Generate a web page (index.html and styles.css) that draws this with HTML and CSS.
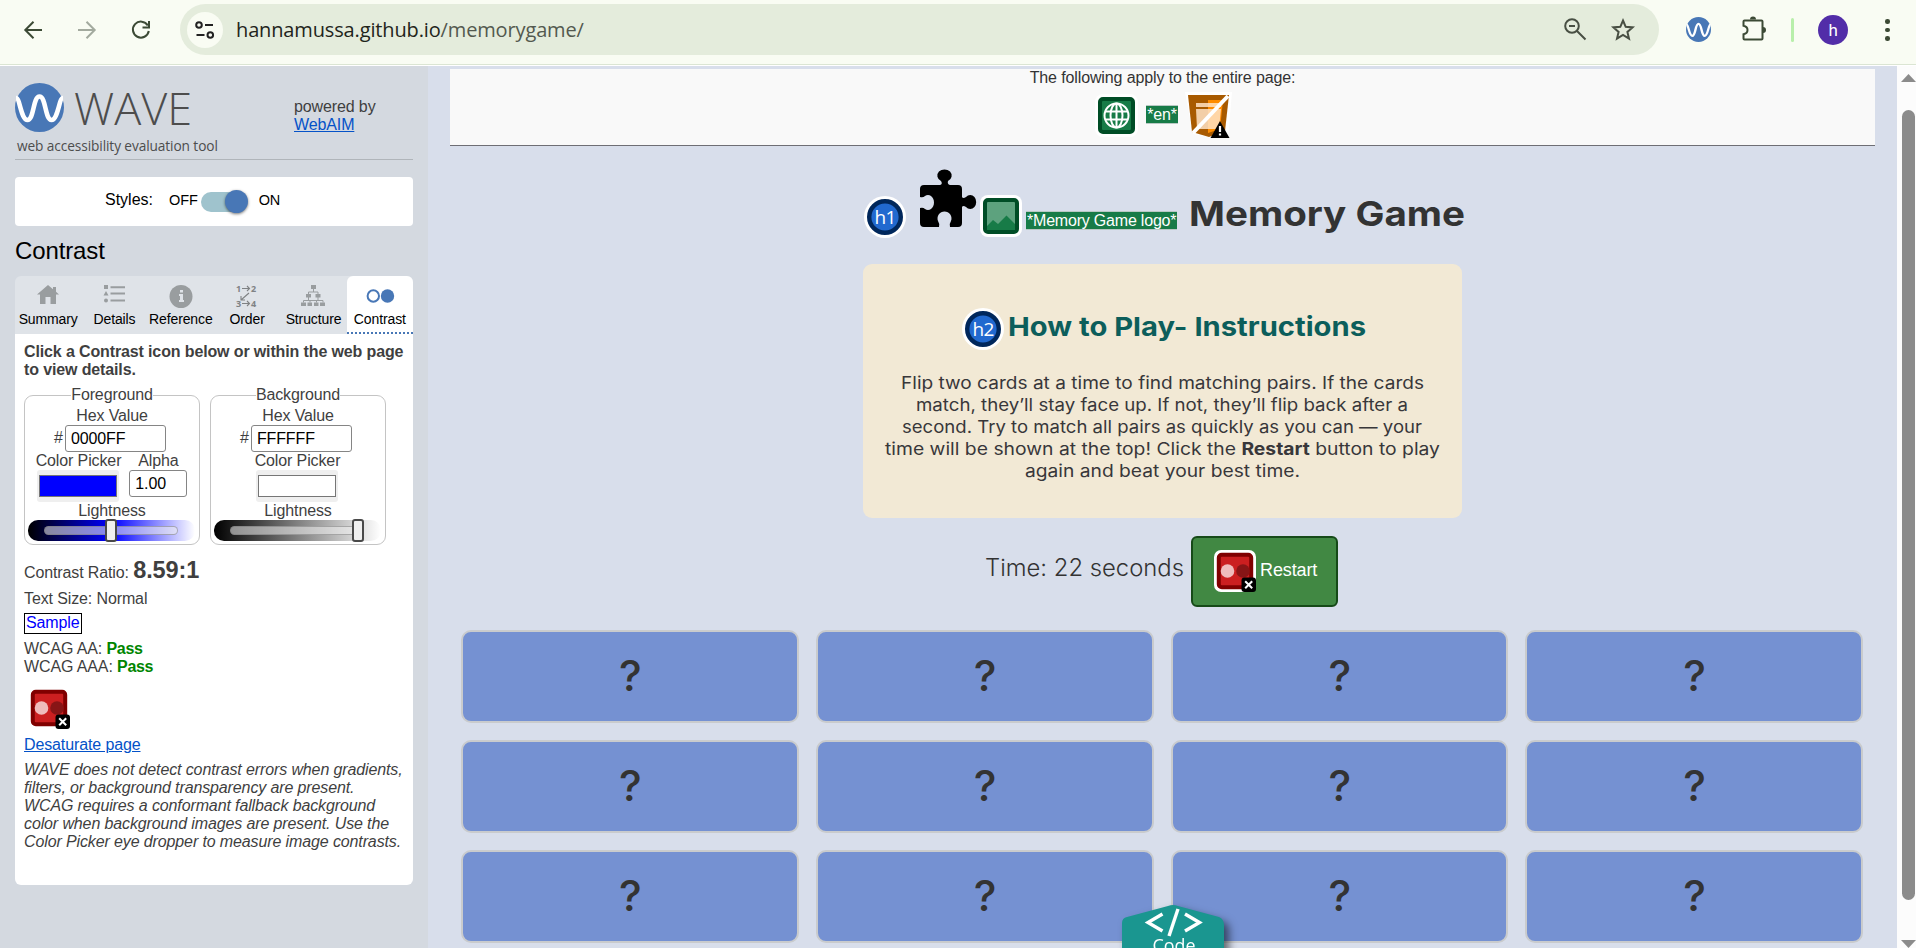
FILE: index.html
```html
<!DOCTYPE html>
<html lang="en">
<head>
<meta charset="utf-8">
<title>Memory Game</title>
<link rel="stylesheet" href="styles.css">
</head>
<body>
<svg width="0" height="0" class="defs">
  <defs>
    <symbol id="wave" viewBox="0 0 49 49">
      <circle cx="24.500" cy="24.500" r="24.500" fill="#4877b6"/>
      <path d="M1 15C5 15 6 37 12.500 37C19 37 18 13.500 24.500 13.500C31 13.500 30 37 36.500 37C43 37 44 15 48 15" fill="none" stroke="#fff" stroke-width="4.600"/>
    </symbol>
    <symbol id="contrast" viewBox="0 0 42 42">
      <rect x="4.800" y="4.800" width="32.400" height="32.400" rx="3" fill="#cb1f20" stroke="#800000" stroke-width="4"/>
      <circle cx="13.500" cy="21" r="6.800" fill="#efbcbc"/><circle cx="29" cy="21" r="6.800" fill="#871516"/>
      <rect x="27.500" y="27.500" width="14.500" height="14.500" rx="3" fill="#000"/>
      <path d="M31.200 31.200l7 7m0-7l-7 7" stroke="#fff" stroke-width="2"/>
    </symbol>
  </defs>
</svg>
<header class="toolbar">
  <svg class="nav" width="164" height="60" viewBox="0 0 164 60" fill="none" stroke="#3c4a35" stroke-width="2">
    <path d="M42 30H25.500M33.500 21.800L25.300 30l8.200 8.200"/>
    <path d="M78 30h16.500M86.500 21.800l8.200 8.200-8.200 8.200" stroke="#a3aa9e"/>
    <path d="M147.800 25.500A8 8 0 1 0 148.800 31M149 21v6.500h-6.500" />
  </svg>
  <div class="omnibox">
    <span class="site"><svg width="36" height="36" viewBox="0 0 36 36" fill="none" stroke="#222" stroke-width="2"><circle cx="12" cy="13" r="2.800"/><path d="M18 13h8M9.500 23h8"/><circle cx="23.300" cy="23" r="2.800"/></svg></span>
    <span class="url">hannamussa.github.io<i>/memorygame/</i></span>
    <svg class="bar-icons" width="80" height="40" viewBox="0 0 80 40" fill="none" stroke="#484f43" stroke-width="2"><circle cx="11" cy="16" r="6.800"/><path d="M16 21l8.500 8.500M8 16h6"/><path d="M62 10.500l2.700 6.300 6.900.6-5.200 4.500 1.600 6.700-6-3.600-6 3.600 1.600-6.700-5.200-4.500 6.900-.6z"/></svg>
  </div>
  <svg class="ext" width="25" height="25"><use href="#wave"/></svg>
  <svg class="puzzle-outline" width="26" height="26" viewBox="0 0 26 26" fill="none" stroke="#3c4a35" stroke-width="2"><path d="M3.500 4.500h17q1 0 1 1v17q0 1-1 1h-17q-1 0-1-1v-4.200q4-.8 4-4.300t-4-4.300V5.500q0-1 1-1z"/><path d="M9 3.600a3 3 0 0 1 6 0zM22 11a3 3 0 0 1 0 6z" fill="#3c4a35" stroke="none"/></svg>
  <span class="divider"></span>
  <span class="avatar">h</span>
  <span class="dots"><b></b><b></b><b></b></span>
</header>
<div class="window">
<aside class="sidebar">
  <div class="brand">
    <svg class="logo" width="49" height="49"><use href="#wave"/></svg>
    <svg class="wordmark" width="120" height="44"><text x="-2" y="37" textLength="118" lengthAdjust="spacingAndGlyphs">WAVE</text></svg>
    <p class="powered">powered by<br><a>WebAIM</a></p>
  </div>
  <p class="tagline">web accessibility evaluation tool</p>
  <div class="styles-box"><span class="lbl">Styles:</span><span>OFF</span><span class="switch"></span><span>ON</span></div>
  <h2>Contrast</h2>
  <nav class="tabs">
    <span><svg width="28" height="26" viewBox="0 0 28 26" fill="#999d9f"><path d="M14 3L3 12.500h3V22h5.500v-7h5v7H22v-9.500h3l-3-2.700V5h-3v2.300z"/></svg>Summary</span>
    <span><svg width="28" height="26" viewBox="0 0 28 26" fill="#999d9f"><path d="M4 3h4v4H4zM6 9l2.500 4.500h-5zM10.500 4.300H25v2H10.500zM10.500 10.500H25v2H10.500zM10.500 17.500H25v2H10.500z"/><circle cx="6" cy="18.500" r="2"/></svg>Details</span>
    <span><svg width="28" height="26" viewBox="0 0 28 26"><circle cx="14" cy="14.500" r="11.500" fill="#999d9f"/><path d="M13 8h3v2.500h-3zM12 12h4v6h1v2h-5v-2h1v-4h-1z" fill="#dfe3e8"/></svg>Reference</span>
    <span><svg class="order" width="28" height="26" viewBox="0 0 28 26"><text x="3" y="10">1</text><text x="18" y="10">2</text><text x="3" y="25">3</text><text x="18" y="25">4</text><path d="M9 6.500h7.500M14 4l2.500 2.500L14 9M9 21.500h7.500M14 19l2.500 2.500L14 24M16 11l-8 7M8 14v4h4" fill="none" stroke="#7f8284" stroke-width="1.100"/></svg>Order</span>
    <span><svg width="28" height="26" viewBox="0 0 28 26" fill="#999d9f"><path d="M12 3h5v4h-5zM7 12h5v3.500H7zM16.500 12h5v3.500h-5zM2 20.500h5V24H2zM8.500 20.500h4.500V24H8.500zM15 20.500h4.500V24H15zM21 20.500h5V24h-5z"/><path d="M14.500 7v3M9.500 12v-2h9.500v2M9.500 15v3M4.500 20.500v-2H24v2M11 18.500v2M17.500 18.500v2M19 15v3" fill="none" stroke="#999d9f"/></svg>Structure</span>
    <span class="active"><svg width="30" height="26" viewBox="0 0 30 26"><circle cx="8.300" cy="14" r="5.700" fill="#fff" stroke="#4877b6" stroke-width="2"/><circle cx="22.500" cy="14" r="6.700" fill="#4877b6"/></svg>Contrast</span>
  </nav>
  <section class="panel">
    <p class="intro">Click a Contrast icon below or within the web page<br>to view details.</p>
    <div class="pickers">
      <div class="picker">
        <span class="legend">Foreground</span>
        <span class="label">Hex Value</span>
        <div class="hex">#<span class="input">0000FF</span></div>
        <div class="pair"><div class="col"><span>Color Picker</span><span class="swatch"><i class="blue"></i></span></div><div class="col"><span>Alpha</span><span class="input alpha">1.00</span></div></div>
        <span class="label light">Lightness</span>
        <div class="slider fg"><span class="track"></span><span class="thumb"></span></div>
      </div>
      <div class="picker">
        <span class="legend">Background</span>
        <span class="label">Hex Value</span>
        <div class="hex">#<span class="input">FFFFFF</span></div>
        <div class="pair"><div class="col"><span>Color Picker</span><span class="swatch"><i class="white"></i></span></div></div>
        <span class="label light">Lightness</span>
        <div class="slider bg"><span class="track"></span><span class="thumb"></span></div>
      </div>
    </div>
    <p class="ratio">Contrast Ratio: <b>8.59:1</b></p>
    <p class="size">Text Size: Normal</p>
    <p class="sample"><span>Sample</span></p>
    <p class="wcag">WCAG AA: <b>Pass</b><br>WCAG AAA: <b>Pass</b></p>
    <svg class="cicon" width="42" height="42"><use href="#contrast"/></svg>
    <p class="desat"><a>Desaturate page</a></p>
    <p class="note">WAVE does not detect contrast errors when gradients,<br>filters, or background transparency are present.<br>WCAG requires a conformant fallback background<br>color when background images are present. Use the<br>Color Picker eye dropper to measure image contrasts.</p>
  </section>
</aside>
<main class="page">
  <div class="strip">
    <p>The following apply to the entire page:</p>
    <div class="strip-icons">
      <svg width="43" height="43" viewBox="0 0 43 43"><rect width="43" height="43" rx="8" fill="#fff"/><rect x="5" y="5" width="33" height="33" rx="3" fill="#177b47" stroke="#004d26" stroke-width="4"/><g fill="none" stroke="#fff" stroke-width="2"><circle cx="21.500" cy="21.500" r="12"/><ellipse cx="21.500" cy="21.500" rx="6" ry="12"/><path d="M21.500 9.500v24M10 17.500h23M10 25.500h23"/></g></svg>
      <span class="tag">*en*</span>
      <svg width="48" height="47" viewBox="0 0 48 47"><path d="M0 0h47l-4 46H30L8 42z" fill="#fff"/><path d="M3 3h41l-4 36-16 6L7 40z" fill="#a85a00"/><path d="M23 8h15l-3 29-12 4z" fill="#ff8c00"/><path d="M11 11h25v4H11zM11 17h25l-2 20H12z" fill="#ffe3c4" opacity=".85"/><path d="M43 4L8 41" stroke="#fff" stroke-width="4"/><path d="M35 29l9.500 17h-19z" fill="#000"/><path d="M35 34v6M35 41.500v2" stroke="#fff" stroke-width="2.200"/></svg>
    </div>
  </div>
  <h1 class="title">
    <svg class="hicon h1i" width="42" height="42" viewBox="0 0 42 42"><circle cx="21" cy="21" r="21" fill="#fff"/><circle cx="21" cy="21" r="15.800" fill="#2169cf" stroke="#00275b" stroke-width="4.400"/><text x="21" y="28" text-anchor="middle">h1</text></svg>
    <svg class="puzzle" width="56" height="56" viewBox="0 0 56 56"><path d="M4 14H20Q23 13 21 10A7.200 6.200 0 1 1 28 10Q27 13 30 14H38Q42 14 42 18V26Q43 28 46 26A6 7 0 1 1 46 36Q43 34 42 36V52Q42 56 38 56H30Q29 53 31 50A7 7 0 1 0 18 50Q20 53 19 56H4Q0 56 0 52V37Q3 36 5 38A6 7.500 0 1 0 5 25Q3 27 0 26V18Q0 14 4 14Z"/></svg>
    <svg class="imgicon" width="42" height="42" viewBox="0 0 42 42"><rect width="42" height="42" rx="8" fill="#fff"/><rect x="5" y="5" width="32" height="32" rx="3" fill="#5da27e" stroke="#004d26" stroke-width="4"/><path d="M7 31l6-6 5 4 8.500-8.500L35 29v6H7z" fill="#177b47"/></svg>
    <span class="tag">*Memory Game logo*</span>
    <svg class="name" width="276" height="44"><text x="0" y="33" textLength="276" lengthAdjust="spacingAndGlyphs">Memory Game</text></svg>
  </h1>
  <section class="howto">
    <h2><svg class="hicon" width="42" height="42" viewBox="0 0 42 42"><circle cx="21" cy="21" r="21" fill="#fff"/><circle cx="21" cy="21" r="15.800" fill="#2169cf" stroke="#00275b" stroke-width="4.400"/><text x="21" y="28" text-anchor="middle">h2</text></svg><svg class="howto-title" width="358" height="40"><text x="0" y="30" textLength="358" lengthAdjust="spacingAndGlyphs">How to Play- Instructions</text></svg></h2>
    <svg class="copy" width="599" height="120">
      <text x="38" y="16" textLength="523" lengthAdjust="spacingAndGlyphs">Flip two cards at a time to find matching pairs. If the cards</text>
      <text x="53" y="38" textLength="492" lengthAdjust="spacingAndGlyphs">match, they’ll stay face up. If not, they’ll flip back after a</text>
      <text x="39" y="60" textLength="520" lengthAdjust="spacingAndGlyphs">second. Try to match all pairs as quickly as you can — your</text>
      <text x="22" y="82" textLength="555" lengthAdjust="spacingAndGlyphs">time will be shown at the top! Click the <tspan class="strong">Restart</tspan> button to play</text>
      <text x="162" y="104" textLength="275" lengthAdjust="spacingAndGlyphs">again and beat your best time.</text>
    </svg>
  </section>
  <div class="status"><svg class="time" width="199" height="62"><text x="0" y="40" textLength="199" lengthAdjust="spacingAndGlyphs">Time: 22 seconds</text></svg><span class="restart"><span class="rwrap"><svg width="42" height="42"><use href="#contrast"/></svg></span>Restart</span></div>
  <div class="board"><span>?</span><span>?</span><span>?</span><span>?</span><span>?</span><span>?</span><span>?</span><span>?</span><span>?</span><span>?</span><span>?</span><span>?</span></div>
  <div class="code"><svg width="130" height="43" viewBox="0 0 130 43"><path d="M0 18Q0 13 5 12L46 1Q51-1 56 1L97 12Q102 14 102 20V60H0z" fill="#1a9690"/><path d="M40.500 9L26 17.500 40.500 26M63 9L77.500 17.500 63 26" fill="none" stroke="#fff" stroke-width="3.400"/><path d="M56 4L47 31" stroke="#fff" stroke-width="3.400"/><text x="52" y="46.500" text-anchor="middle" textLength="43" lengthAdjust="spacingAndGlyphs">Code</text></svg></div>
</main>
<div class="scrollbar"><svg width="15" height="8"><path d="M0 8L7.500 0 15 8z" fill="#8b8b8b"/></svg><span class="grip"></span><svg width="15" height="8"><path d="M0 0h15L7.500 8z" fill="#8b8b8b"/></svg></div>
</div>
</body>
</html>
```
FILE: styles.css
```css
* { box-sizing: border-box; }
body { margin: 0; width: 1916px; height: 948px; overflow: hidden; font: 16px/18px "Liberation Sans", Arial, sans-serif; letter-spacing: -.12px; color: #3f3f3f; background: #fff; display: flex; flex-direction: column; }
p, h1, h2 { margin: 0; font-weight: inherit; }
svg { display: block; flex: none; overflow: visible; }
svg text { letter-spacing: 0; }
.defs { position: absolute; }
a { color: #0452c8; text-decoration: underline; }

.toolbar { height: 65px; flex: none; background: #f9fcf3; border-bottom: 1px solid #dbe5d3; display: flex; align-items: flex-start; margin-bottom: 1px; }
.nav { margin-right: 16px; }
.omnibox { width: 1479px; height: 51px; margin-top: 4px; border-radius: 26px; background: #e4ecdc; display: flex; align-items: center; padding: 0 18px 0 7px; }
.site { width: 36px; height: 36px; border-radius: 50%; background: #f9fcf3; }
.url { margin-left: 13px; font: 20px/40px "Open Sans", "Noto Sans", sans-serif; color: #1f251b; letter-spacing: -.14px; white-space: nowrap; }
.url i { font-style: normal; color: #53594f; }
.bar-icons { margin-left: auto; }
.ext { margin: 17px 0 0 27px; }
.puzzle-outline { margin: 16px 0 0 30px; }
.divider { width: 3px; height: 24px; margin: 18px 0 0 24px; border-radius: 2px; background: #b8efaa; }
.avatar { width: 30px; height: 30px; margin: 15px 0 0 24px; border-radius: 50%; background: #522da8; color: #fff; font: 17px/30px Roboto, sans-serif; text-align: center; }
.dots { display: grid; gap: 4px; margin: 19px 0 0 37px; }
.dots b { width: 4.500px; height: 4.500px; border-radius: 50%; background: #3c4a35; }

.window { flex: 1; min-height: 0; display: flex; }
.sidebar { width: 428px; flex: none; background: #d4d9e0; padding: 17px 15px 0; }
.brand { display: flex; height: 56px; }
.wordmark { margin: 5px 0 0 12px; }
.wordmark text { font: 300 45px "Open Sans", sans-serif; fill: #4d4d4d; }
.powered { margin: 15px 0 0 98px; white-space: nowrap; }
.tagline { height: 21px; border-bottom: 1px solid #b0b5ba; padding-left: 2px; font: 13.700px/14px "Open Sans", sans-serif; letter-spacing: -.1px; color: #4d4d4d; white-space: nowrap; }
.styles-box { height: 49px; margin-top: 17px; border-radius: 4px; background: #fff; display: flex; align-items: center; padding: 0 0 3px 90px; color: #000; font-size: 14.500px; }
.styles-box .lbl { font-size: 16px; margin-right: 16px; letter-spacing: 0; }
.switch { width: 44px; height: 20px; margin: 3px 14px 0 3px; border-radius: 10px; background: #9fc3cd; display: flex; justify-content: flex-end; align-items: center; }
.switch::after { content: ""; width: 23px; height: 23px; margin-right: -3px; border-radius: 50%; background: #4877b6; box-shadow: 0 1px 3px #0008; }
.sidebar > h2 { color: #000; font-size: 24px; line-height: 28px; margin: 11px 0 11px; }
.tabs { display: grid; grid-template-columns: repeat(6, 1fr); width: 398px; height: 58px; background: #dfe3e8; border-radius: 6px 6px 0 0; color: #000; font-size: 14px; }
.tabs span { display: flex; flex-direction: column; align-items: center; padding-top: 6px; line-height: 22px; white-space: nowrap; }
.tabs .active { background: #fff; border-radius: 6px 6px 0 0; border-bottom: 2px dotted #4877b6; }
.order text { font: bold 9px "Open Sans", sans-serif; fill: #7f8284; }
.panel { height: 551px; width: 398px; background: #fff; border-radius: 0 0 6px 6px; padding: 9px 0 0 9px; }
.intro { font-weight: bold; white-space: nowrap; letter-spacing: -.13px; }
.pickers { display: flex; gap: 10px; margin-top: 16px; }
.picker { width: 176px; height: 150px; border: 1px solid #c4c4c4; border-radius: 9px; display: flex; flex-direction: column; align-items: center; }
.legend { background: #fff; margin-top: -11px; line-height: 20px; }
.label { line-height: 18px; margin-top: 2px; }
.hex { display: flex; gap: 2px; line-height: 26px; height: 25px; margin-right: 4px; }
.input { width: 101px; height: 27px; border: 1px solid #858585; border-radius: 3px; color: #000; padding-left: 5px; line-height: 25px; text-align: left; }
.pair { display: flex; gap: 8px; height: 50px; margin: 2px 1px 0 0; }
.col { display: flex; flex-direction: column; align-items: center; line-height: 18px; }
.swatch { width: 82px; height: 32px; border-radius: 3px; background: #efefef; padding: 5px 2px; }
.swatch i { display: block; height: 22px; border: 1px solid #767676; }
.blue { background: #00f; }
.white { background: #fff; }
.alpha { width: 58px; }
.light { margin-top: -1px; line-height: 19px; }
.slider { width: 167px; height: 21px; border-radius: 10px; margin: 0 0 0 -2px; padding-left: 16px; display: flex; align-items: center; }
.fg { background: linear-gradient(90deg, #000, #00f 50%, #fff); }
.bg { background: linear-gradient(90deg, #000, #808080 50%, #fff); }
.track { width: 134px; height: 9px; border: 1px solid #7778; border-radius: 5px; background: #efefef90; }
.thumb { width: 12px; height: 23px; margin-left: -73px; border: 2px solid #494949; border-radius: 3px; background: #efefef; }
.bg .thumb { margin-left: -12px; }
.ratio { margin-top: 13px; line-height: 25px; }
.ratio b { font-size: 23.500px; }
.size { margin-top: 5px; }
.sample { margin-top: 5px; height: 22px; }
.sample span { display: inline-block; border: 1px solid #000; padding: 0 1px 1px; color: #00f; }
.wcag { margin-top: 5px; }
.wcag b { color: #008500; letter-spacing: -.3px; }
.cicon { margin: 11px 0 0 4px; }
.desat { margin-top: 7px; }
.note { margin-top: 7px; font-style: italic; white-space: nowrap; }

.page { position: relative; width: 1469px; background: #d8deeb; color: #333; }
.strip { width: 1425px; height: 77px; margin: 3px 0 0 22px; background: #f9f9f9; border-bottom: 1px solid #6e6e74; text-align: center; }
.strip-icons { display: flex; justify-content: center; align-items: flex-start; margin-top: 4px; padding: 3px 0 0 3px; }
.strip-icons .tag { margin: 11px 7px 0 8px; }
.strip-icons svg:last-child { margin-top: -2px; }
.tag { background: #177b47; color: #fff; border: 1px solid #b9c9c4; border-width: 1px 0; font-size: 16px; line-height: 17px; padding: 0 1px; white-space: nowrap; letter-spacing: -.2px; }
.title { display: flex; align-items: flex-start; height: 94px; margin: 24px 0 0 435px; }
.hicon text { font: 400 19px "Open Sans", sans-serif; fill: #fff; letter-spacing: -.8px; }
.h1i { margin: 26px 14px 0 1px; }
.puzzle { margin-top: 1px; }
.imgicon { margin: 25px 4px 0 4px; }
.title .tag { margin-top: 41px; }
.name { margin-left: 12px; margin-top: 23px; }
.name text { font: 700 34.500px Inter, sans-serif; fill: #333; }
.howto { width: 599px; height: 254px; margin-left: 435px; background: #f2e9d5; border-radius: 9px; padding-top: 42px; }
.howto h2 { display: flex; margin-left: 99px; height: 67px; align-items: flex-start; }
.howto h2 .hicon { margin-top: 2px; }
.howto-title { margin-left: 4px; }
.howto-title text { font: 700 26px Inter, sans-serif; fill: #0c5e5b; }
.copy text { font: 400 17.300px Inter, sans-serif; fill: #38373a; }
.copy .strong { font-weight: 700; }
.status { display: flex; height: 112px; padding: 18px 0 0 557px; }
.time { margin-right: 7px; }
.time text { font: 350 23.500px Inter, sans-serif; fill: #333; }
.restart { width: 147px; height: 71px; border: 2px solid #164a18; border-radius: 6px; background: #418843; color: #fff; display: flex; align-items: flex-start; padding: 12px 0 0 21px; font-size: 18px; line-height: 40px; }
.rwrap { background: #fff; border-radius: 7px; margin-right: 4px; }
.board { display: grid; grid-template-columns: repeat(4, 1fr); grid-auto-rows: 93px; gap: 17px; width: 1402px; margin-left: 33px; }
.board span { border: 2px solid #c9cbcd; border-radius: 10px; background: #7591d2; display: flex; align-items: center; justify-content: center; padding: 0 0 2px 1px; font: 500 43px/1 Inter, sans-serif; }
.code { position: absolute; left: 694px; bottom: 0; filter: drop-shadow(5px 5px 4px #0008); }
.code text { font: 19px "Open Sans", sans-serif; fill: #fff; }
.scrollbar { width: 19px; background: #fcfcfc; display: flex; flex-direction: column; align-items: center; padding: 8px 0 0 3px; }
.grip { width: 13px; height: 790px; margin: 28px 0 40px; border-radius: 7px; background: #8b8b8b; flex: none; }
```
